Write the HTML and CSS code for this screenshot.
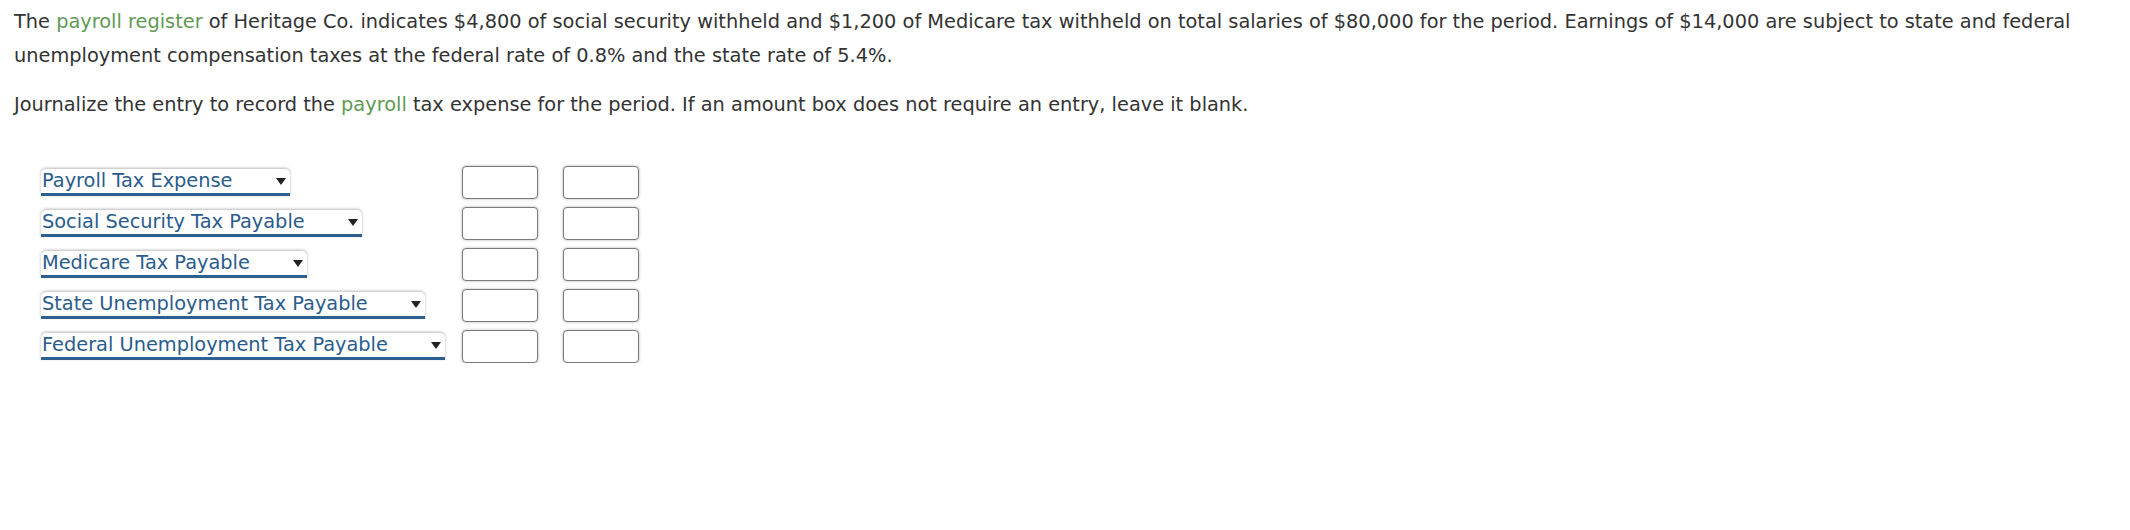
FILE: index.html
```html
<!DOCTYPE html>
<html lang="en">
<head>
<meta charset="utf-8">
<title>Payroll tax entry</title>
<link rel="stylesheet" href="styles.css">
</head>
<body>
<div class="page">
  <p class="para first">The <span class="term">payroll register</span> of Heritage Co. indicates $4,800 of social security withheld and $1,200 of Medicare tax withheld on total salaries of $80,000 for the period. Earnings of $14,000 are subject to state and federal unemployment compensation taxes at the federal rate of 0.8% and the state rate of 5.4%.</p>
  <p class="para second">Journalize the entry to record the <span class="term">payroll</span> tax expense for the period. If an amount box does not require an entry, leave it blank.</p>
  <div class="journal">
    <div class="acct"><span class="select"><span class="label">Payroll Tax Expense</span><span class="arrow"></span></span></div>
    <div class="amt"></div><div class="amt"></div>
    <div class="acct"><span class="select"><span class="label">Social Security Tax Payable</span><span class="arrow"></span></span></div>
    <div class="amt"></div><div class="amt"></div>
    <div class="acct"><span class="select"><span class="label">Medicare Tax Payable</span><span class="arrow"></span></span></div>
    <div class="amt"></div><div class="amt"></div>
    <div class="acct"><span class="select"><span class="label">State Unemployment Tax Payable</span><span class="arrow"></span></span></div>
    <div class="amt"></div><div class="amt"></div>
    <div class="acct"><span class="select"><span class="label">Federal Unemployment Tax Payable</span><span class="arrow"></span></span></div>
    <div class="amt"></div><div class="amt"></div>
  </div>
</div>
</body>
</html>
```
FILE: styles.css
```css
html, body {
  margin: 0;
  padding: 0;
  background: #ffffff;
}
.page {
  padding: 5px 14px 0 14px;
  font-family: "DejaVu Sans", Verdana, sans-serif;
  font-size: 19.35px;
  color: #333333;
}
.para {
  margin: 0;
  line-height: 34px;
}
.second {
  margin-top: 15px;
}
.term {
  color: #5f9a55;
}
.journal {
  display: grid;
  grid-template-columns: 396px 76px 76px;
  column-gap: 25px;
  row-gap: 8px;
  margin-top: 44px;
  padding-left: 27px;
}
.acct {
  display: flex;
  align-items: center;
  min-width: 0;
  white-space: nowrap;
}
.select {
  display: inline-flex;
  flex-shrink: 0;
  align-items: center;
  gap: 43px;
  height: 24px;
  padding: 0 4px 0 1px;
  border-bottom: 3px solid #2d6090;
  border-radius: 5px 5px 0 0;
  box-shadow: 0 -1px 3px rgba(0, 0, 0, 0.28);
  background: #ffffff;
  color: #2a5c8d;
  line-height: 24px;
  white-space: nowrap;
}
.label {
  white-space: nowrap;
}
.arrow {
  flex-shrink: 0;
  width: 0;
  height: 0;
  border-left: 5px solid transparent;
  border-right: 5px solid transparent;
  border-top: 7px solid #222222;
}
.amt {
  height: 31px;
  border: 1px solid #7a7a7a;
  border-radius: 4px;
  box-shadow: 0 0 3px rgba(0, 0, 0, 0.3);
  background: #ffffff;
}
```
